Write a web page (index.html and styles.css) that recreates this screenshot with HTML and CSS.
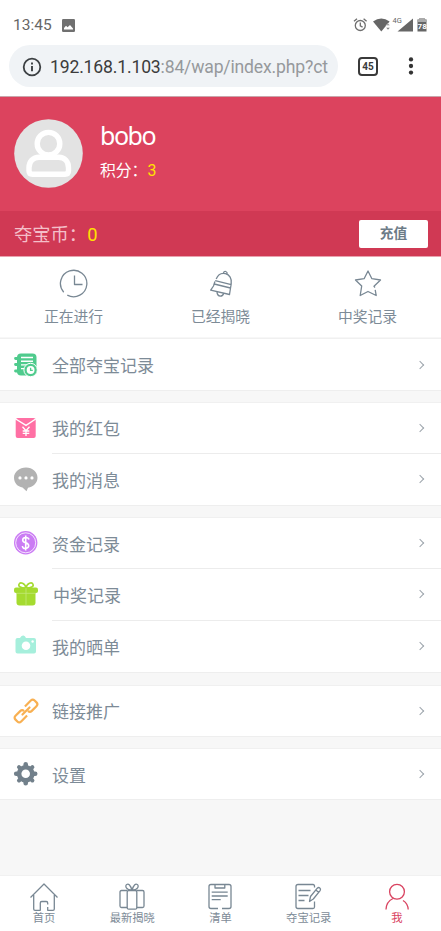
FILE: index.html
```html
<!DOCTYPE html>
<html lang="zh-CN">
<head>
<meta charset="utf-8">
<title>我</title>
<link rel="stylesheet" href="styles.css">
</head>
<body>
<div class="status">
  <span class="time">13:45</span>
  <svg class="pic" width="13" height="13" viewBox="0 0 13 13"><rect width="13" height="13" rx="1.2" fill="#707070"/><path d="M2 10.500V9l2-2.300 1.600 1.600L8 6l3 3.500v1z" fill="#fff"/></svg>
  <svg class="sys" width="76" height="18" viewBox="0 0 76 18">
    <g fill="none" stroke="#6f6f6f" stroke-width="1.300"><circle cx="7.300" cy="9.500" r="5"/><path d="M7.300 6.500v3.300l2.300 1.300M1 5.300l3-2.600M13.600 5.300l-3-2.600"/></g>
    <path d="M20 5.500Q28.300-.5 36.600 5.500L28.300 15.600z" fill="#666"/><path d="M33 9.500l2-2 2 2zM33 11.500h4l-2 2.500z" fill="#777" stroke="#fff" stroke-width=".5"/>
    <text x="39.500" y="6.800" class="net">4G</text>
    <path d="M60 2.500v13H44.500z" fill="#666"/>
    <path d="M64.500 3.500h2V2h5v1.500h2v12h-9z" fill="#666"/><path d="M64.500 3.500h2V2h5v1.500h2V6h-9z" fill="#aaa"/>
    <text x="64.600" y="12.800" class="bat">78</text>
  </svg>
</div>
<div class="browser">
  <div class="address">
    <svg width="20" height="20" viewBox="0 0 20 20"><circle cx="10" cy="10" r="8.300" fill="none" stroke="#3c4043" stroke-width="1.800"/><path d="M10 9v5.300M10 5.500v2" stroke="#3c4043" stroke-width="1.900"/></svg>
    <span class="url">192.168.1.103<i>:84/wap/index.php?ct</i></span>
  </div>
  <span class="tabs">45</span>
  <svg class="dots" width="6" height="20" viewBox="0 0 6 20" fill="#333"><circle cx="3" cy="3.400" r="2.150"/><circle cx="3" cy="10" r="2.150"/><circle cx="3" cy="16.600" r="2.150"/></svg>
</div>
<header class="hero">
  <svg class="avatar" width="70" height="70" viewBox="0 0 70 70"><circle cx="35.500" cy="34.500" r="34.300" fill="#e3e3e3"/><g fill="none" stroke="#fff" stroke-width="5.400"><circle cx="35.500" cy="24.700" r="11.300"/><path d="M26 38.200h19.500c6.500 0 10 4.500 10 10.500v3q0 3.500-3.500 3.500H19.500q-3.500 0-3.500-3.500v-3c0-6 4-10.500 10-10.500z" stroke-linejoin="round"/></g></svg>
  <div class="who"><div class="name">bobo</div><div class="score">积分：<b>3</b></div></div>
</header>
<div class="coins"><span>夺宝币：<b>0</b></span><button class="charge">充值</button></div>
<nav class="quick">
  <a><svg width="30" height="30" viewBox="0 0 30 30"><path d="M4.700 23.200A13.200 13.200 0 1 1 8.300 26.100M15.500 6.500V15.500h8"/></svg>正在进行</a>
  <a><svg width="30" height="30" viewBox="0 0 30 30"><path d="M10.200 10C12 5.600 15.500 3.600 19.500 4.600s6.500 5 5.700 10.200M8.900 12.500L7.500 17l-2.800 4.200L23.500 25.500l.7-4.500 1-6.200M17.300 4.200q.8-2.200 2.500-1.700t1.400 2.800M9.200 11.700l16 4M8.200 15l16.300 4M11 22.900q.2 4 3.300 4.200 2.700 0 3.300-2.600"/></svg>已经揭晓</a>
  <a><svg width="30" height="30" viewBox="0 0 30 30"><path d="M22 18.500L21 17.300l6.500-6.300-8.600-1.300L15 2l-3.900 7.700L2.500 11l6.200 6-1.500 9.500 7.800-4 8.200 4-1-5.700"/></svg>中奖记录</a>
</nav>
<main>
  <section>
    <a class="row"><svg viewBox="0 0 26 26"><rect x="4" y="1.500" width="19.500" height="22" rx="4" fill="#4fcb8d"/><path d="M2.500 6.500H6M2.500 12.500H6M2.500 19H6" stroke="#4fcb8d" stroke-width="2.800" stroke-linecap="round"/><path d="M8 5.500h12M8 9.200h12M8 12.900h6M8 16.600h3" stroke="#fff" stroke-width="1.400"/><circle cx="17.600" cy="18" r="6.700" fill="#4fcb8d" stroke="#fff" stroke-width="1"/><circle cx="17.600" cy="18" r="3.900" fill="#fff"/><path d="M17.600 15.800v2.500h2.200" fill="none" stroke="#4fcb8d" stroke-width="1.300"/></svg><span>全部夺宝记录</span><i class="go"></i></a>
  </section>
  <section>
    <a class="row"><svg viewBox="0 0 26 26"><rect x="2.700" y="3" width="20" height="20" rx="2" fill="#ff70a4"/><path d="M2.700 4l10.300 6.300L22.700 4" fill="none" stroke="#fff" stroke-width="1.400"/><path d="M9.500 11.800l3.500 4 3.500-4M13 15.800V21M9.700 16h6.600M9.700 18.400h6.600" fill="none" stroke="#fff" stroke-width="1.300"/></svg><span>我的红包</span><i class="go"></i></a>
    <a class="row"><svg viewBox="0 0 26 26"><path d="M13 1.500c6.500 0 11.500 4.500 11.500 10.200 0 5-4 9-9.500 10l-1.500 3.500-4-3.600C4.500 20.500 1 16.800 1 11.700 1 6 6.500 1.500 13 1.500z" fill="#b2b2b2"/><g fill="#fff"><circle cx="7" cy="11.900" r="1.600"/><circle cx="13" cy="11.900" r="1.600"/><circle cx="19" cy="11.900" r="1.600"/></g></svg><span>我的消息</span><i class="go"></i></a>
  </section>
  <section>
    <a class="row"><svg viewBox="0 0 26 26"><circle cx="12.700" cy="12.800" r="11.700" fill="#cb7cf4"/><circle cx="12.700" cy="12.800" r="10" fill="none" stroke="#fff" stroke-width=".8"/><path d="M16 9.500Q15.500 7.500 12.700 7.500T9.700 10q0 2 3 2.800t3 3-3 2.600-3.300-2.400M12.700 5.500v15" fill="none" stroke="#fff" stroke-width="1.600"/></svg><span>资金记录</span><i class="go"></i></a>
    <a class="row gift"><svg viewBox="0 0 26 26"><path d="M12.500 7C8 7 5 5.500 6 3.200s6-1.500 7 3.800c1-5.300 6-6.100 7-3.800S18 7 13 7z" fill="none" stroke="#a5db30" stroke-width="1.600"/><rect x="1" y="6.500" width="24" height="5.500" rx="2" fill="#a5db30"/><path d="M3.500 12h19v9.500q0 3-3 3h-13q-3 0-3-3z" fill="#a5db30"/><path d="M13 7v17.500M3.500 12.300h19" stroke="#c4e87a" stroke-width=".8"/></svg><span>中奖记录</span><i class="go"></i></a>
    <a class="row"><svg viewBox="0 0 26 26"><path d="M4.500 5H7q1-2.500 3-2.500h.5q1.500 0 2.500 2.500h8q2 0 2 2v11.500q0 2-2 2H4.500q-2 0-2-2V7q0-2 2-2z" fill="#a6efdc"/><circle cx="13" cy="12.800" r="4.300" fill="#fff"/><circle cx="19.600" cy="8.500" r="1.200" fill="#fff"/></svg><span>我的晒单</span><i class="go"></i></a>
  </section>
  <section>
    <a class="row"><svg viewBox="0 0 26 26"><g transform="rotate(-45 13 13)" fill="none" stroke="#f8b052" stroke-width="2.200"><path d="M10.500 17H2.200q-2.700 0-2.700-2.700v-2.600q0-2.700 2.700-2.700h6.600q2.700 0 2.700 2.700M15.500 9h8.300q2.700 0 2.700 2.700v2.600q0 2.700-2.700 2.700h-6.600q-2.700 0-2.700-2.700"/><path d="M8 13h10" stroke-linecap="round"/></g></svg><span>链接推广</span><i class="go"></i></a>
  </section>
  <section>
    <a class="row"><svg viewBox="0 0 26 26"><g stroke="#72808b" stroke-width="4.600" stroke-linecap="round"><path d="M12.700 3.300v19M3.200 12.800h19"/><path d="M6 6.100l13.400 13.400M6 19.500L19.400 6.100" stroke-width="4"/></g><circle cx="12.700" cy="12.800" r="8.900" fill="#72808b"/><circle cx="12.700" cy="12.800" r="4.300" fill="#fff"/></svg><span>设置</span><i class="go"></i></a>
  </section>
</main>
<footer class="bottom">
  <a><svg width="30" height="30" viewBox="0 0 30 30"><path d="M1.500 15.500L15 2l13.500 13.500M4.700 13v14q0 1.300 1.300 1.300h5.300V21q0-1.500 1.500-1.500h4.400q1.500 0 1.500 1.500v1.500M18.700 25v3.300H24q1.300 0 1.300-1.300V13"/></svg>首页</a>
  <a><svg width="30" height="30" viewBox="0 0 30 30"><rect x="10.200" y="8.500" width="9.600" height="18.700" rx="1.500"/><path d="M10.200 8.500H4.500Q3 8.500 3 10v14q0 1.500 1.500 1.500h5.700M19.800 8.500h5.700Q27 8.500 27 10v14q0 1.500-1.500 1.500h-5.700M15 8.200C13.500 3 11.500 1.500 9.700 2.500S8.700 8.200 15 8.200 22.100 3.500 20.300 2.500 16.500 3 15 8.200z"/></svg>最新揭晓</a>
  <a><svg width="30" height="30" viewBox="0 0 30 30"><path d="M10 2.500H6q-2 0-2 2v20q0 2 2 2h7M17 26.500h7q2 0 2-2v-20q0-2-2-2h-4M10 2.500h9.800V6H10zM6.700 10.200h16M6.700 14h16M6.700 17.600h9"/></svg>清单</a>
  <a><svg width="30" height="30" viewBox="0 0 30 30"><path d="M20.500 5.500V4Q20.500 2.500 19 2.500H4q-2 0-2 2v20q0 2 2 2h9M13 26.500h6q1.500 0 1.500-1.500v-5.500M4.500 8.500h12M4.500 13.500h10M4.500 18.500h6M15.500 19.500l1-5 6.800-8.300q1.200-1.200 2.500-.2t.3 2.600l-6.800 8.400zM21.800 8l2.800 2.300"/></svg>夺宝记录</a>
  <a class="on"><svg width="30" height="30" viewBox="0 0 30 30"><circle cx="15" cy="9.800" r="7.400"/><path d="M4 27.500c.2-5.500 2.800-9 7-11M21 18.500c3.300 2 5 5 5.200 9"/></svg>我</a>
</footer>
</body>
</html>
```
FILE: styles.css
```css
* { box-sizing: border-box; }
body {
  margin: 0;
  width: 441px;
  height: 931px;
  display: flex;
  flex-direction: column;
  overflow: hidden;
  background: #f7f7f7;
  color: #7d8b97;
  font-family: Roboto, "Noto Sans CJK SC", sans-serif;
}
svg { display: block; flex: none; }
b { font-weight: 400; color: #ffe200; }
.status {
  height: 45px;
  padding: 5px 12px 0 13px;
  display: flex;
  align-items: center;
  background: #fff;
}
.time { width: 49px; font-size: 15.500px; color: #666; }
.sys { margin-left: auto; }
.net { font: 7.500px Roboto, sans-serif; fill: #666; }
.bat { font: bold 8px Roboto, sans-serif; fill: #fff; }
.browser {
  height: 52px;
  padding: 0 27px 9px 9px;
  display: flex;
  align-items: center;
  background: #fff;
  border-bottom: 1px solid #c9a5ab;
}
.address {
  width: 329px;
  height: 42px;
  padding: 2px 0 0 13px;
  display: flex;
  align-items: center;
  gap: 8px;
  border-radius: 21px;
  background: #f0f3f6;
}
.url { font-size: 17.600px; letter-spacing: -.17px; color: #3c3c3c; white-space: nowrap; }
.url i { font-style: normal; color: #96999c; }
.tabs {
  width: 20px;
  height: 19px;
  margin-left: 20px;
  border: 2px solid #3a3a3a;
  border-radius: 4px;
  text-align: center;
  font: bold 10px/15px Roboto, sans-serif;
  color: #3a3a3a;
}
.dots { margin-left: auto; }
.hero {
  height: 114px;
  padding: 21px 13px;
  display: flex;
  gap: 17px;
  background: #dc435e;
  color: #fff;
}
.avatar { margin-top: 1px; }
.name { font: 25px/34px "Noto Sans", sans-serif; letter-spacing: -1.500px; }
.score { margin-top: 7px; font-size: 15.800px; line-height: 24px; }
.coins {
  height: 46px;
  padding: 0 13px 0 14px;
  display: flex;
  align-items: center;
  justify-content: space-between;
  background: #d03954;
  border-bottom: 1px solid #e9a2af;
  font-size: 18.300px;
  color: #f4bfc9;
}
.coins span { padding-bottom: 1px; }
.charge {
  width: 69px;
  height: 28px;
  padding: 0 0 3px;
  border: 0;
  border-radius: 2px;
  background: #fff;
  color: #6c7b87;
  font: bold 13.700px/25px "Noto Sans CJK SC", sans-serif;
}
.quick {
  height: 80px;
  display: grid;
  grid-template-columns: repeat(3, 1fr);
  background: #fff;
  font-size: 14.800px;
  line-height: 22px;
}
.quick a, .bottom a { display: flex; flex-direction: column; align-items: center; }
.quick a { padding-top: 12px; gap: 7px; }
.quick svg, .bottom svg { fill: none; stroke: #788793; stroke-width: 1.300; stroke-linejoin: round; }
main { display: flex; flex-direction: column; gap: 11.100px; padding-top: 1.400px; }
section { background: #fff; border-top: 1px solid #f0f0f0; border-bottom: 1px solid #eee; }
.row { height: 50.300px; padding: 0 17px 0 13px; display: flex; align-items: center; gap: 13px; font-size: 17px; }
.row + .row {
  height: 52px;
  background: linear-gradient(#ececec, #ececec) 52px 0 / 389px 1px no-repeat;
}
.row svg { width: 26px; height: 26px; }
.row.gift span { padding-left: 1px; }
.go {
  width: 6px;
  height: 6px;
  margin: 0 1px 0 auto;
  border: solid #9da5ac;
  border-width: 1.300px 1.300px 0 0;
  transform: rotate(45deg);
}
.bottom {
  height: 56px;
  margin-top: auto;
  display: grid;
  grid-template-columns: repeat(5, 1fr);
  background: #fff;
  border-top: 1px solid #f1f1f1;
  font-size: 11.300px;
  line-height: 14px;
}
.bottom a { padding-top: 6px; }
.bottom .on { color: #d94461; }
.bottom .on svg { stroke: #d94461; }
```
